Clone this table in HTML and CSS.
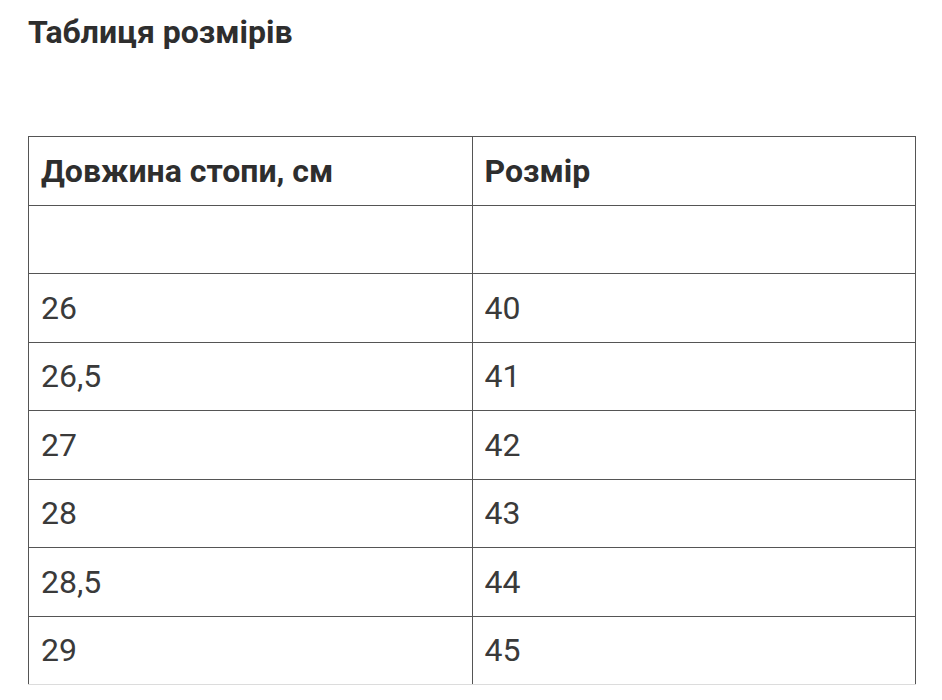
FILE: index.html
```html
<!DOCTYPE html>
<html lang="uk">
<head>
<meta charset="utf-8">
<title>Таблиця розмірів</title>
<link rel="stylesheet" href="styles.css">
</head>
<body>
<main class="page">
  <h1 class="title">Таблиця розмірів</h1>
  <table class="sizes">
    <thead>
      <tr><th>Довжина стопи, см</th><th>Розмір</th></tr>
    </thead>
    <tbody>
      <tr><td></td><td></td></tr>
      <tr><td>26</td><td>40</td></tr>
      <tr><td>26,5</td><td>41</td></tr>
      <tr><td>27</td><td>42</td></tr>
      <tr><td>28</td><td>43</td></tr>
      <tr><td>28,5</td><td>44</td></tr>
      <tr class="last"><td>29</td><td>45</td></tr>
    </tbody>
  </table>
</main>
</body>
</html>
```
FILE: styles.css
```css
html, body {
  margin: 0;
  padding: 0;
  background: #ffffff;
}
.page {
  padding: 14px 26px 0 28px;
  font-family: Roboto, "Noto Sans", "Liberation Sans", sans-serif;
}
.title {
  margin: 0;
  font-size: 32px;
  line-height: 36px;
  font-weight: 700;
  color: #2e2e2e;
}
.sizes {
  margin-top: 86px;
  width: 888px;
  border-collapse: collapse;
  table-layout: fixed;
}
.sizes th,
.sizes td {
  width: 50%;
  height: 67.5px;
  padding: 0 0 0 12px;
  border: 1.5px solid #555555;
  text-align: left;
  vertical-align: middle;
  font-size: 32px;
  line-height: 36px;
  color: #3a3a3a;
}
.sizes th {
  font-weight: 700;
  color: #2e2e2e;
}
.sizes td {
  font-weight: 400;
}
.sizes .last td {
  border-bottom-color: #dcdcdc;
}
```
